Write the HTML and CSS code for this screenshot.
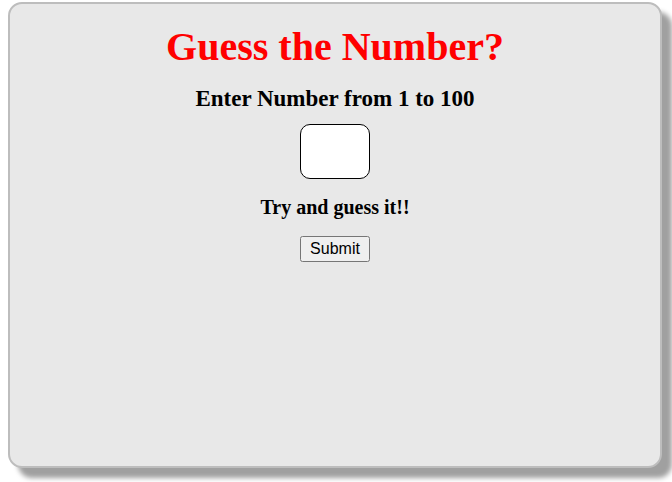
FILE: index.html
```html
<!DOCTYPE html>
<html>
<head>
<meta charset="utf-8">
<link rel="stylesheet" href="styles.css">
</head>
<body>
<div class="card">
  <h1 class="title">Guess the Number?</h1>
  <h2 class="prompt">Enter Number from 1 to 100</h2>
  <input class="guess" type="text">
  <p class="hint">Try and guess it!!</p>
  <button class="submit">Submit</button>
</div>
</body>
</html>
```
FILE: styles.css
```css
html, body {
  margin: 0;
  padding: 0;
  background: #ffffff;
}
body {
  padding: 2px 0 14px 8px;
  font-family: "Liberation Serif", "Times New Roman", serif;
}
.card {
  box-sizing: border-box;
  width: 654px;
  height: 466px;
  background: #e8e8e8;
  border: 2px solid #bdbdbd;
  border-radius: 14px;
  box-shadow: 10px 10px 5px #a0a0a0;
  display: flex;
  flex-direction: column;
  align-items: center;
}
.title {
  margin: 20px 0 0 0;
  font-size: 40px;
  line-height: 46px;
  color: #ff0000;
  font-weight: bold;
}
.prompt {
  margin: 16px 0 0 0;
  font-size: 23px;
  line-height: 26px;
  color: #000;
}
.guess {
  box-sizing: border-box;
  margin-top: 12px;
  width: 70px;
  height: 55px;
  border: 1px solid #000;
  border-radius: 10px;
  background: #fff;
}
.hint {
  margin: 16px 0 0 0;
  font-size: 20px;
  line-height: 24px;
  font-weight: bold;
  color: #000;
}
.submit {
  margin-top: 17px;
  font-family: "Liberation Sans", Arial, sans-serif;
  font-size: 16px;
  width: 70px;
  height: 26px;
  padding: 0;
}
```
